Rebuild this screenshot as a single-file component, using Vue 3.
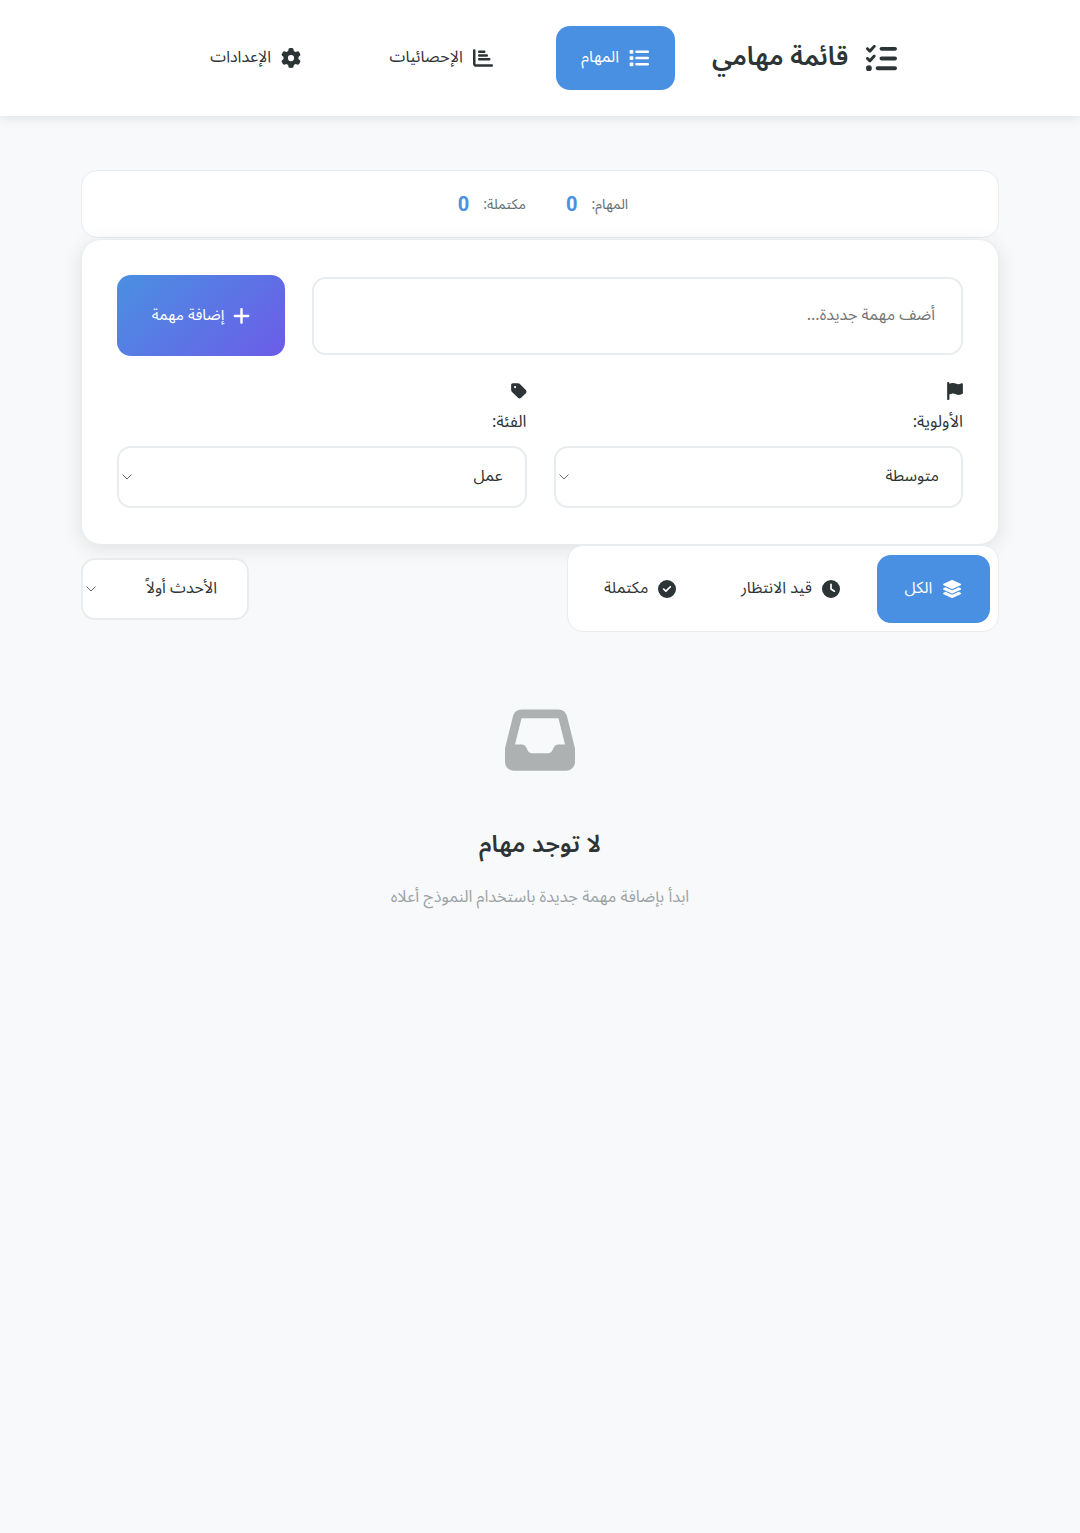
<script setup>
import { ref } from 'vue'

const task = ref('')
const priority = ref('medium')
const category = ref('work')
const sort = ref('newest')
const filter = ref('all')
const page = ref('tasks')

const icons = {
  listCheck: { box: '0 0 512 512', d: 'M152.1 38.2c9.9 8.9 10.7 24 1.8 33.9l-72 80c-4.4 4.9-10.6 7.8-17.2 7.9s-12.9-2.4-17.6-7L7 113C-2.3 103.6-2.3 88.4 7 79s24.6-9.4 33.9 0l22.1 22.1 55.1-61.2c8.9-9.9 24-10.7 33.9-1.8zm0 160c9.9 8.9 10.7 24 1.8 33.9l-72 80c-4.4 4.9-10.6 7.8-17.2 7.9s-12.9-2.4-17.6-7L7 273c-9.4-9.4-9.4-24.6 0-33.9s24.6-9.4 33.9 0l22.1 22.1 55.1-61.2c8.9-9.9 24-10.7 33.9-1.8zM224 96c0-17.7 14.3-32 32-32H480c17.7 0 32 14.3 32 32s-14.3 32-32 32H256c-17.7 0-32-14.3-32-32zm0 160c0-17.7 14.3-32 32-32H480c17.7 0 32 14.3 32 32s-14.3 32-32 32H256c-17.7 0-32-14.3-32-32zM160 416c0-17.7 14.3-32 32-32H480c17.7 0 32 14.3 32 32s-14.3 32-32 32H192c-17.7 0-32-14.3-32-32zM48 368a48 48 0 1 1 0 96 48 48 0 1 1 0-96z' },
  list: { box: '0 0 512 512', d: 'M40 48C26.7 48 16 58.7 16 72v48c0 13.3 10.7 24 24 24H88c13.3 0 24-10.7 24-24V72c0-13.3-10.7-24-24-24H40zM192 64c-17.7 0-32 14.3-32 32s14.3 32 32 32H480c17.7 0 32-14.3 32-32s-14.3-32-32-32H192zm0 160c-17.7 0-32 14.3-32 32s14.3 32 32 32H480c17.7 0 32-14.3 32-32s-14.3-32-32-32H192zm0 160c-17.7 0-32 14.3-32 32s14.3 32 32 32H480c17.7 0 32-14.3 32-32s-14.3-32-32-32H192zM16 232v48c0 13.3 10.7 24 24 24H88c13.3 0 24-10.7 24-24V232c0-13.3-10.7-24-24-24H40c-13.3 0-24 10.7-24 24zM40 368c-13.3 0-24 10.7-24 24v48c0 13.3 10.7 24 24 24H88c13.3 0 24-10.7 24-24V392c0-13.3-10.7-24-24-24H40z' },
  chart: { box: '0 0 512 512', d: 'M32 32c17.7 0 32 14.3 32 32V400c0 8.8 7.2 16 16 16H480c17.7 0 32 14.3 32 32s-14.3 32-32 32H80c-44.2 0-80-35.8-80-80V64C0 46.3 14.3 32 32 32zm96 64c0-17.7 14.3-32 32-32H288c17.7 0 32 14.3 32 32s-14.3 32-32 32H160c-17.7 0-32-14.3-32-32zm32 64H352c17.7 0 32 14.3 32 32s-14.3 32-32 32H160c-17.7 0-32-14.3-32-32s14.3-32 32-32zm0 96H416c17.7 0 32 14.3 32 32s-14.3 32-32 32H160c-17.7 0-32-14.3-32-32s14.3-32 32-32z' },
  gear: { box: '0 0 512 512', d: 'M495.9 166.6c3.2 8.7 .5 18.4-6.4 24.6l-43.3 39.4c1.1 8.3 1.7 16.8 1.7 25.4s-.6 17.1-1.7 25.4l43.3 39.4c6.9 6.2 9.6 15.9 6.4 24.6c-4.4 11.9-9.7 23.3-15.8 34.3l-4.7 8.1c-6.6 11-14 21.4-22.1 31.2c-5.9 7.2-15.7 9.6-24.5 6.8l-55.7-17.7c-13.4 10.3-28.2 18.9-44 25.4l-12.5 57.1c-2 9.1-9 16.3-18.2 17.8c-13.8 2.3-28 3.5-42.5 3.5s-28.7-1.2-42.5-3.5c-9.2-1.5-16.2-8.7-18.2-17.8l-12.5-57.1c-15.8-6.5-30.6-15.1-44-25.4L83.1 425.9c-8.8 2.8-18.6 .3-24.5-6.8c-8.1-9.8-15.5-20.2-22.1-31.2l-4.7-8.1c-6.1-11-11.4-22.4-15.8-34.3c-3.2-8.7-.5-18.4 6.4-24.6l43.3-39.4C64.6 273.1 64 264.6 64 256s.6-17.1 1.7-25.4L22.4 191.2c-6.9-6.2-9.6-15.9-6.4-24.6c4.4-11.9 9.7-23.3 15.8-34.3l4.7-8.1c6.6-11 14-21.4 22.1-31.2c5.9-7.2 15.7-9.6 24.5-6.8l55.7 17.7c13.4-10.3 28.2-18.9 44-25.4l12.5-57.1c2-9.1 9-16.3 18.2-17.8C227.3 1.2 241.5 0 256 0s28.7 1.2 42.5 3.5c9.2 1.5 16.2 8.7 18.2 17.8l12.5 57.1c15.8 6.5 30.6 15.1 44 25.4l55.7-17.7c8.8-2.8 18.6-.3 24.5 6.8c8.1 9.8 15.5 20.2 22.1 31.2l4.7 8.1c6.1 11 11.4 22.4 15.8 34.3zM256 336a80 80 0 1 0 0-160 80 80 0 1 0 0 160z' },
  plus: { box: '0 0 448 512', d: 'M256 80c0-17.7-14.3-32-32-32s-32 14.3-32 32V224H48c-17.7 0-32 14.3-32 32s14.3 32 32 32H192V432c0 17.7 14.3 32 32 32s32-14.3 32-32V288H400c17.7 0 32-14.3 32-32s-14.3-32-32-32H256V80z' },
  flag: { box: '0 0 448 512', d: 'M64 32C64 14.3 49.7 0 32 0S0 14.3 0 32V64 368 480c0 17.7 14.3 32 32 32s32-14.3 32-32V352l64.3-16.1c41.1-10.3 84.6-5.5 122.5 13.4c44.2 22.1 95.5 24.8 141.7 7.4l34.7-13c12.5-4.7 20.8-16.6 20.8-30V66.1c0-23-24.2-38-44.8-27.7l-9.6 4.8c-46.3 23.2-100.8 23.2-147.1 0c-35.1-17.6-75.4-22-113.5-12.5L64 48V32z' },
  tag: { box: '0 0 448 512', d: 'M0 80V229.5c0 17 6.7 33.3 18.7 45.3l176 176c25 25 65.5 25 90.5 0L418.7 317.3c25-25 25-65.5 0-90.5l-176-176c-12-12-28.3-18.7-45.3-18.7H48C21.5 32 0 53.5 0 80zm112 32a32 32 0 1 1 0 64 32 32 0 1 1 0-64z' },
  layers: { box: '0 0 576 512', d: 'M264.5 5.2c14.9-6.9 32.1-6.9 47 0l218.6 101c8.5 3.9 13.9 12.4 13.9 21.8s-5.4 17.9-13.9 21.8l-218.6 101c-14.9 6.9-32.1 6.9-47 0L45.9 149.8C37.4 145.8 32 137.3 32 128s5.4-17.9 13.9-21.8L264.5 5.2zM476.9 209.6l53.2 24.6c8.5 3.9 13.9 12.4 13.9 21.8s-5.4 17.9-13.9 21.8l-218.6 101c-14.9 6.9-32.1 6.9-47 0L45.9 277.8C37.4 273.8 32 265.3 32 256s5.4-17.9 13.9-21.8l53.2-24.6 152 70.2c23.4 10.8 50.4 10.8 73.8 0l152-70.2zm-152 198.2l152-70.2 53.2 24.6c8.5 3.9 13.9 12.4 13.9 21.8s-5.4 17.9-13.9 21.8l-218.6 101c-14.9 6.9-32.1 6.9-47 0L45.9 405.8C37.4 401.8 32 393.3 32 384s5.4-17.9 13.9-21.8l53.2-24.6 152 70.2c23.4 10.8 50.4 10.8 73.8 0z' },
  clock: { box: '0 0 512 512', d: 'M256 0a256 256 0 1 1 0 512A256 256 0 1 1 256 0zM232 120V256c0 8 4 15.5 10.7 20l96 64c11 7.4 25.9 4.4 33.3-6.7s4.4-25.9-6.7-33.3L280 243.2V120c0-13.3-10.7-24-24-24s-24 10.7-24 24z' },
  check: { box: '0 0 512 512', d: 'M256 512A256 256 0 1 0 256 0a256 256 0 1 0 0 512zM369 209L241 337c-9.4 9.4-24.6 9.4-33.9 0l-64-64c-9.4-9.4-9.4-24.6 0-33.9s24.6-9.4 33.9 0l47 47L335 175c9.4-9.4 24.6-9.4 33.9 0s9.4 24.6 0 33.9z' },
  inbox: { box: '0 0 512 512', d: 'M121 32C91.6 32 66 52 58.9 80.5L1.9 308.4C.6 313.5 0 318.7 0 323.9V416c0 35.3 28.7 64 64 64H448c35.3 0 64-28.7 64-64V323.9c0-5.2-.6-10.4-1.9-15.5l-57-227.9C446 52 420.4 32 391 32H121zm0 64H391l48 192H387.8c-12.1 0-23.2 6.8-28.6 17.7l-14.3 28.6c-5.4 10.8-16.5 17.7-28.6 17.7H195.8c-12.1 0-23.2-6.8-28.6-17.7l-14.3-28.6c-5.4-10.8-16.5-17.7-28.6-17.7H73L121 96z' }
}

const navItems = [
  { id: 'tasks', label: 'المهام', icon: 'list' },
  { id: 'stats', label: 'الإحصائيات', icon: 'chart' },
  { id: 'settings', label: 'الإعدادات', icon: 'gear' }
]

const filters = [
  { id: 'all', label: 'الكل', icon: 'layers' },
  { id: 'pending', label: 'قيد الانتظار', icon: 'clock' },
  { id: 'done', label: 'مكتملة', icon: 'check' }
]
</script>

<template>
  <div class="app" dir="rtl">
    <header class="header">
      <div class="logo">
        <svg class="logo-icon" :viewBox="icons.listCheck.box"><path :d="icons.listCheck.d" /></svg>
        <h1>قائمة مهامي</h1>
      </div>
      <nav class="nav">
        <button
          v-for="item in navItems"
          :key="item.id"
          class="nav-btn"
          :class="{ active: page === item.id }"
          @click="page = item.id"
        >
          <svg class="icon" :viewBox="icons[item.icon].box"><path :d="icons[item.icon].d" /></svg>
          <span>{{ item.label }}</span>
        </button>
      </nav>
    </header>

    <main class="main">
      <div class="stats">
        <div class="stat">
          <span class="stat-label">المهام:</span>
          <span class="stat-value">0</span>
        </div>
        <div class="stat">
          <span class="stat-label">مكتملة:</span>
          <span class="stat-value">0</span>
        </div>
      </div>

      <section class="add-card">
        <div class="add-row">
          <input v-model="task" class="task-input" type="text" placeholder="أضف مهمة جديدة..." />
          <button class="add-btn">
            <svg class="icon plus" :viewBox="icons.plus.box"><path :d="icons.plus.d" /></svg>
            <span>إضافة مهمة</span>
          </button>
        </div>
        <div class="options">
          <div class="option">
            <svg class="opt-icon" :viewBox="icons.flag.box"><path :d="icons.flag.d" /></svg>
            <label>الأولوية:</label>
            <select v-model="priority">
              <option value="low">منخفضة</option>
              <option value="medium">متوسطة</option>
              <option value="high">عالية</option>
            </select>
          </div>
          <div class="option">
            <svg class="opt-icon" :viewBox="icons.tag.box"><path :d="icons.tag.d" /></svg>
            <label>الفئة:</label>
            <select v-model="category">
              <option value="work">عمل</option>
              <option value="home">منزل</option>
              <option value="other">أخرى</option>
            </select>
          </div>
        </div>
      </section>

      <div class="toolbar">
        <div class="filters">
          <button
            v-for="f in filters"
            :key="f.id"
            class="filter-btn"
            :class="{ active: filter === f.id }"
            @click="filter = f.id"
          >
            <svg class="icon" :viewBox="icons[f.icon].box"><path :d="icons[f.icon].d" /></svg>
            <span>{{ f.label }}</span>
          </button>
        </div>
        <select v-model="sort" class="sort">
          <option value="newest">الأحدث أولاً</option>
          <option value="oldest">الأقدم أولاً</option>
        </select>
      </div>

      <div class="empty">
        <svg class="empty-icon" :viewBox="icons.inbox.box"><path :d="icons.inbox.d" /></svg>
        <h3>لا توجد مهام</h3>
        <p>ابدأ بإضافة مهمة جديدة باستخدام النموذج أعلاه</p>
      </div>
    </main>
  </div>
</template>

<style>
body {
  margin: 0;
  background: #f8f9fa;
}
</style>

<style scoped>
.app {
  min-height: 1533px;
  background: #f8f9fa;
  color: #2d3436;
  font-family: "Noto Sans Arabic", "Noto Sans CJK SC", sans-serif;
  box-sizing: border-box;
}

.header {
  height: 116px;
  box-sizing: border-box;
  padding-left: 2px;
  background: #fff;
  box-shadow: 0 2px 10px rgba(0, 0, 0, 0.1);
  display: flex;
  align-items: center;
  justify-content: center;
  gap: 37.5px;
}

.logo {
  display: flex;
  align-items: center;
  gap: 18px;
}

.logo-icon {
  width: 31px;
  height: 31px;
  fill: #2d3436;
}

.logo h1 {
  margin: 0 0 4px;
  font-size: 26px;
  font-weight: 600;
}

.nav {
  display: flex;
  gap: 37.5px;
}

.nav-btn,
.filter-btn {
  display: flex;
  align-items: center;
  gap: 10px;
  border: none;
  background: transparent;
  color: #2d3436;
  font-family: inherit;
  font-size: 16px;
  white-space: nowrap;
  cursor: pointer;
}

.nav-btn span {
  margin-bottom: 2px;
}

.nav-btn {
  height: 64px;
  padding: 0 25.5px;
  border-radius: 14px;
}

.nav-btn.active,
.filter-btn.active {
  background: #4a90e2;
  color: #fff;
}

.icon {
  width: 20px;
  height: 20px;
  fill: currentColor;
  flex-shrink: 0;
}

.main {
  padding: 54px 81px 0;
}

.stats {
  height: 68px;
  box-sizing: border-box;
  margin-bottom: 1px;
  padding-left: 6px;
  background: #fff;
  border: 1px solid #e9ecef;
  border-radius: 16px;
  display: flex;
  align-items: center;
  justify-content: center;
  gap: 40px;
}

.stat {
  display: flex;
  align-items: center;
  gap: 14px;
}

.stat-label {
  font-size: 14px;
  color: #636e72;
}

.stat-value {
  font-family: Roboto, sans-serif;
  font-size: 20px;
  font-weight: 700;
  color: #4a90e2;
}

.add-card {
  box-sizing: border-box;
  height: 306px;
  padding: 35px;
  background: #fff;
  border: 1px solid #e9ecef;
  border-radius: 20px;
  box-shadow: 0 4px 20px rgba(0, 0, 0, 0.1);
}

.add-row {
  display: flex;
  align-items: center;
  gap: 27px;
}

.task-input {
  flex: 1;
  min-width: 0;
  height: 78px;
  box-sizing: border-box;
  padding: 0 26px 2px;
  border: 2px solid #e9ecef;
  border-radius: 14px;
  font-family: inherit;
  font-size: 16px;
  color: #2d3436;
  outline: none;
}

.task-input::placeholder {
  color: #757575;
}

.add-btn {
  width: 168px;
  height: 81px;
  display: flex;
  align-items: center;
  justify-content: center;
  gap: 9px;
  border: none;
  border-radius: 14px;
  background: linear-gradient(135deg, #4a90e2, #6c5ce7);
  color: #fff;
  font-family: inherit;
  font-size: 15.4px;
  cursor: pointer;
}

.add-btn span {
  margin-bottom: 2px;
}

.add-btn .plus {
  width: 17px;
}

.options {
  margin-top: 26px;
  display: grid;
  grid-template-columns: 1fr 1fr;
  gap: 27px;
}

.option {
  display: flex;
  flex-direction: column;
  align-items: flex-start;
}

.opt-icon {
  width: 16px;
  height: 18px;
  fill: #2d3436;
}

.option label {
  margin-top: 11px;
  margin-bottom: 13px;
  font-size: 16.5px;
  line-height: 22px;
}

select {
  height: 62px;
  box-sizing: border-box;
  padding: 0 22px 2px 24px;
  appearance: none;
  background: #fff url("data:image/svg+xml,%3Csvg xmlns='http://www.w3.org/2000/svg' width='10' height='6'%3E%3Cpath d='M.5.5l4.5 4.5L9.5.5' fill='none' stroke='%23666' stroke-width='1'/%3E%3C/svg%3E") no-repeat 3px center;
  border: 2px solid #e9ecef;
  border-radius: 14px;
  font-family: inherit;
  font-size: 16px;
  color: #2d3436;
  outline: none;
}

.option select {
  width: 100%;
}

.toolbar {
  display: flex;
  align-items: center;
  justify-content: space-between;
}

.filters {
  box-sizing: border-box;
  width: 432px;
  height: 87px;
  padding: 9px 8px;
  background: #fff;
  border: 1px solid #e9ecef;
  border-radius: 16px;
  display: flex;
  align-items: center;
  gap: 9.5px;
}

.filter-btn {
  height: 68px;
  padding: 0 27.5px;
  border-radius: 14px;
}

.filter-btn .icon {
  width: auto;
  height: 18px;
}

.filter-btn span {
  margin-bottom: 2px;
}

.sort {
  width: 168px;
  padding-right: 30px;
}

.empty {
  display: flex;
  flex-direction: column;
  align-items: center;
  padding-top: 73px;
}

.empty-icon {
  width: 70px;
  height: 70px;
  fill: #2d3436;
  opacity: 0.36;
}

.empty h3 {
  margin: 44px 0 0;
  font-size: 24px;
  font-weight: 600;
}

.empty p {
  margin: 10px 0 0;
  font-size: 16.3px;
  color: #636e72;
  opacity: 0.62;
}
</style>
